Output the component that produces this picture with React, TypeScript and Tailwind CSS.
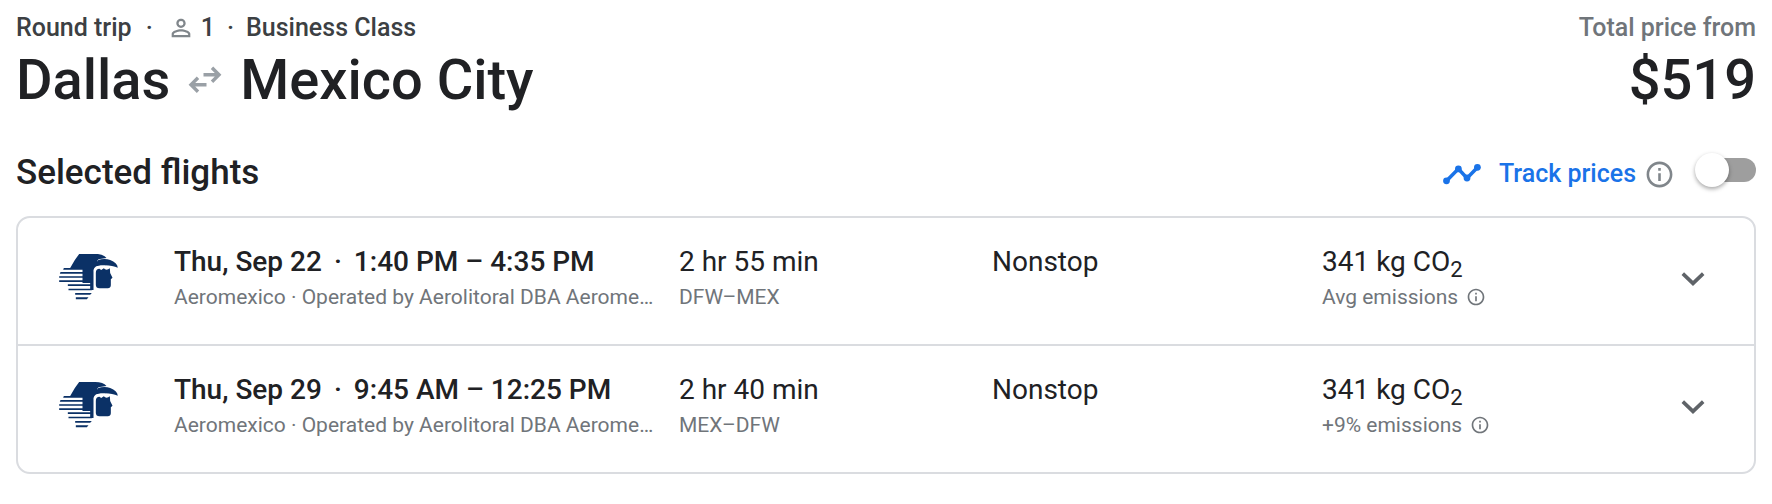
import { useState } from 'react';
import { clsx } from 'clsx';

type Flight = {
  date: string;
  times: string;
  operator: string;
  duration: string;
  route: string;
  stops: string;
  co2: string;
  emissions: string;
};

const flights: Flight[] = [
  {
    date: 'Thu, Sep 22',
    times: '1:40 PM – 4:35 PM',
    operator: 'Aeromexico · Operated by Aerolitoral DBA Aerome…',
    duration: '2 hr 55 min',
    route: 'DFW–MEX',
    stops: 'Nonstop',
    co2: '341 kg CO',
    emissions: 'Avg emissions',
  },
  {
    date: 'Thu, Sep 29',
    times: '9:45 AM – 12:25 PM',
    operator: 'Aeromexico · Operated by Aerolitoral DBA Aerome…',
    duration: '2 hr 40 min',
    route: 'MEX–DFW',
    stops: 'Nonstop',
    co2: '341 kg CO',
    emissions: '+9% emissions',
  },
];

function PersonIcon() {
  return (
    <svg viewBox="0 0 24 24" className="w-7 h-7 shrink-0" fill="#80868b" aria-hidden="true">
      <path d="M12 5.9a2.1 2.1 0 1 1 0 4.2 2.1 2.1 0 0 1 0-4.2m0 9c2.97 0 6.1 1.46 6.1 2.1v1.1H5.9V17c0-.64 3.13-2.1 6.1-2.1M12 4C9.79 4 8 5.79 8 8s1.79 4 4 4 4-1.79 4-4-1.79-4-4-4m0 9c-2.67 0-8 1.34-8 4v3h16v-3c0-2.66-5.33-4-8-4" />
    </svg>
  );
}

function SwapIcon() {
  return (
    <svg viewBox="0 0 34 28" className="w-[34px] h-7 shrink-0" fill="none" stroke="#9aa0a6" strokeWidth="3.4" aria-hidden="true">
      <path d="M15.5 8.8H31M24 1.8l7 7-7 7" />
      <path d="M18.500 18.800H3M10 11.800l-7 7 7 7" />
    </svg>
  );
}

function TrendIcon() {
  return (
    <svg viewBox="0 0 38 22" className="w-[38px] h-[22px] shrink-0" fill="#1a73e8" aria-hidden="true">
      <path d="M3.4 17.9 15.4 5.8l8.6 9.4L34.4 4.4" fill="none" stroke="#1a73e8" strokeWidth="3.6" />
      <circle cx="3.5" cy="17.8" r="3.4" />
      <circle cx="15.4" cy="5.9" r="3.4" />
      <circle cx="24" cy="15" r="3.4" />
      <circle cx="34.4" cy="4.3" r="3.4" />
    </svg>
  );
}

function InfoIcon({ className }: { className?: string }) {
  return (
    <svg viewBox="0 0 24 24" className={clsx('shrink-0', className)} fill="currentColor" aria-hidden="true">
      <path d="M11 17h2v-6h-2zm1-15C6.48 2 2 6.48 2 12s4.48 10 10 10 10-4.48 10-10S17.52 2 12 2m0 18c-4.41 0-8-3.59-8-8s3.59-8 8-8 8 3.59 8 8-3.59 8-8 8M11 9h2V7h-2z" />
    </svg>
  );
}

function AirlineLogo() {
  return (
    <svg viewBox="10 12 176 138" className="w-[59px] h-[46px]" fill="#0b3166" role="img" aria-label="Aeromexico">
      {/* Crest and back of the head */}
      <path d="M70 12h48c16 0 28 4 34 12l-20 3c-5 1-7 3-8 7l28 12c-9-1-17-1-23 1-12 1-16 8-16 18v55h-10V99H80V54H43l14-24z" />
      {/* Beak */}
      <path d="M126 31c12-5 26-5 37-1 14 5 22 13 23 23-10-4-24-7-38-7-10 0-19-1-26-5z" />
      {/* Face */}
      <path d="M120 68c0-8 4-12 11-12l5 4 8-5c5 6 12 5 18 0l1 14 7 14-5 5v18c0 6-4 9-9 9h-25c-7 0-11-4-11-10z" />
      {/* Feather stripes */}
      <path d="M24 54h58v5H22zM14 66h68v5H12zM10 79h72v4H10zM10 91h72v5H10zM36 103h70v5H36zM38 116h70v5H38zM58 129h50l-5 5H58zM60 142h38l-5 6H60z" />
    </svg>
  );
}

function FlightRow({ flight }: { flight: Flight }) {
  const [open, setOpen] = useState(false);

  return (
    <li className="grid grid-cols-[116px_505fr_313fr_330fr_330fr_82px] pl-10 pr-5 pt-6 pb-8">
      <div className="pl-px pt-3">
        <AirlineLogo />
      </div>
      <div className="min-w-0 whitespace-nowrap">
        <div className="text-[28px] leading-10 font-medium">
          {flight.date}
          <span className="px-3">·</span>
          {flight.times}
        </div>
        <div className="text-[21px] leading-[30px] text-[#70757a]">{flight.operator}</div>
      </div>
      <div>
        <div className="text-[28px] leading-10">{flight.duration}</div>
        <div className="text-[21px] leading-[30px] text-[#70757a]">{flight.route}</div>
      </div>
      <div className="text-[28px] leading-10">{flight.stops}</div>
      <div>
        <div className="text-[28px] leading-10">
          {flight.co2}
          <sub className="text-[22px]">2</sub>
        </div>
        <div className="flex items-center gap-2 text-[21px] leading-[30px] text-[#70757a]">
          {flight.emissions}
          <button type="button" aria-label="Emissions details">
            <InfoIcon className="w-5 h-5" />
          </button>
        </div>
      </div>
      <button
        type="button"
        aria-label="Flight details"
        aria-expanded={open}
        onClick={() => setOpen(!open)}
        className="flex justify-center items-center pt-1 text-[#5f6368]"
      >
        <svg viewBox="0 0 24 14" className={clsx('w-6 h-[14px]', open && 'rotate-180')} fill="none" stroke="currentColor" strokeWidth="3.6" aria-hidden="true">
          <path d="M1.800 1.600 12 11.400l10.200-9.800" />
        </svg>
      </button>
    </li>
  );
}

export default function App() {
  const [tracking, setTracking] = useState(false);

  return (
    <main className="px-4 pt-3 bg-white text-[#202124] font-['Roboto',sans-serif]">
      <header className="flex justify-between">
        <div>
          <div className="flex items-center h-8 text-[25px] font-medium text-[#3c4043]">
            Round trip
            <span className="px-3.5">·</span>
            <PersonIcon />
            <span className="pl-1.5">1</span>
            <span className="px-3">·</span>
            Business Class
          </div>
          <h1 className="flex items-center gap-[18px] text-[56px] leading-[72px] font-medium">
            Dallas
            <SwapIcon />
            Mexico City
          </h1>
        </div>
        <div className="text-right">
          <div className="text-[25px] leading-8 font-medium text-[#70757a]">Total price from</div>
          <div className="text-[56px] leading-[72px] font-medium">$519</div>
        </div>
      </header>

      <section className="pt-8">
        <div className="flex justify-between items-center h-12">
          <h2 className="pt-0.5 text-[35px] font-medium">Selected flights</h2>
          <div className="flex items-center">
            <div className="flex items-center pt-1">
              <TrendIcon />
              <label htmlFor="track-prices" className="pl-[18px] text-[25px] font-medium text-[#1a73e8]">
                Track prices
              </label>
              <button type="button" aria-label="About price tracking" className="pl-2 text-[#80868b]">
                <InfoIcon className="w-[31px] h-[31px]" />
              </button>
            </div>
            <input
              id="track-prices"
              type="checkbox"
              role="switch"
              checked={tracking}
              onChange={(e) => setTracking(e.target.checked)}
              className="appearance-none flex items-center w-[59px] h-6 ml-[22px] mb-1 rounded-full bg-[#9e9e9e] checked:bg-[#8ab4f8] before:content-[''] before:w-[34px] before:h-[34px] before:-ml-0.5 before:shrink-0 before:rounded-full before:bg-white before:shadow-[0_2px_4px_rgba(0,0,0,0.35)] checked:before:ml-auto"
            />
          </div>
        </div>

        <ul className="mt-5 border-2 border-[#dadce0] rounded-[14px] divide-y-2 divide-[#dadce0]">
          {flights.map((flight) => (
            <FlightRow key={flight.date} flight={flight} />
          ))}
        </ul>
      </section>
    </main>
  );
}
